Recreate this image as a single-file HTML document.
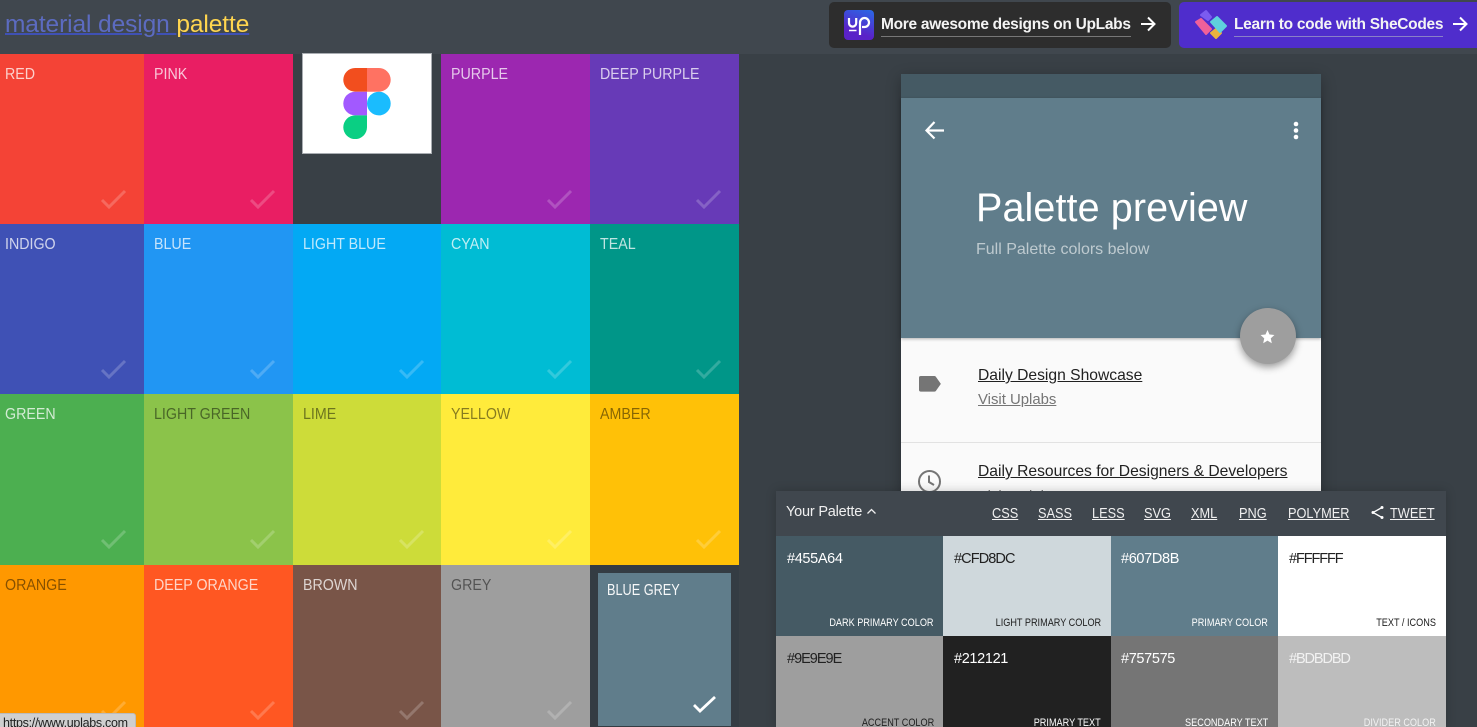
<!DOCTYPE html>
<html><head><meta charset="utf-8">
<style>
html,body{margin:0;padding:0;width:1477px;height:727px;overflow:hidden;background:#394046;font-family:"Liberation Sans",sans-serif}
#r{position:absolute;left:0;top:0;width:1477px;height:727px;overflow:hidden;background:#394046}
div,span,svg{position:absolute}
.t{white-space:nowrap}
.tile .l{left:5px;top:12px;font-size:16px;line-height:18px;white-space:nowrap;transform:scaleX(.89);transform-origin:left center}
.u{text-decoration:underline}
.w{color:#fff;opacity:.75}
.d{color:#000;opacity:.47}
.tab{top:506px;font-size:14.500px;line-height:17px;color:#f0f0f0;text-decoration:underline;white-space:nowrap;transform:scaleX(.88);transform-origin:left center}
.hex{font-size:14.500px;line-height:17px;letter-spacing:-.35px;white-space:nowrap}
.cap{font-size:11px;line-height:13px;white-space:nowrap;transform:scaleX(.83);transform-origin:right center}
.c{fill:none;stroke:#fff;stroke-width:3;opacity:.2}
</style></head><body><div id="r">
<div style="left:0;top:0;width:1477px;height:54px;background:#40474e"></div>
<div class="t" style="left:5px;top:10px;font-size:24.500px;line-height:30px;letter-spacing:-.1px"><u style="color:#5c6bc0;text-decoration-color:#3f51b5;text-decoration-thickness:2px">material design </u><u style="color:#ffd54f;text-decoration-color:#3f51b5;text-decoration-thickness:2px">palette</u></div>

<div style="left:829px;top:2px;width:342px;height:46px;background:#2d2d2d;border-radius:5px"></div>
<div style="left:844px;top:10px;width:30px;height:30px;border-radius:4px;background:linear-gradient(200deg,#2a6ae6,#5a22c8 70%)"></div>
<svg style="left:844px;top:10px" width="30" height="30" viewBox="0 0 30 30" fill="none" stroke="#fff" stroke-width="2.200"><path d="M5 8v5a3.600 3.600 0 0 0 7.200 0V8M16 25V12.500a4.500 4.500 0 1 1 4.500 4.500H18"/><path d="M5 20.500h7.500" stroke-width="1.500"/></svg>
<div class="t" style="left:881px;top:15px;font-size:15.500px;font-weight:bold;line-height:19px;color:#f4f4f4;letter-spacing:-.29px">More awesome designs on UpLabs</div>
<div style="left:881px;top:36px;width:250px;height:1px;background:#777"></div>
<svg style="left:1139px;top:15px" width="18" height="18" viewBox="0 0 18 18" fill="none" stroke="#fff" stroke-width="2"><path d="M2 9h13M9 2.500 15.500 9 9 15.500"/></svg>

<div style="left:1179px;top:2px;width:298px;height:46px;background:#4f2dcc;border-radius:5px 0 0 5px"></div>
<svg style="left:1192px;top:8px" width="36" height="34" viewBox="0 0 36 34" stroke-width="2" stroke-linejoin="round"><path d="M9 7l5-4 5 6-3 3z" fill="#7b5cf0" stroke="#7b5cf0"/><path d="M4 14l5-3 10 10-5 5z" fill="#f0609a" stroke="#f0609a"/><path d="M19 25l5-4 5 4-5 5z" fill="#ecb23f" stroke="#ecb23f"/><path d="M19 14l6-5 9 9-6 6z" fill="#5fd0dd" stroke="#5fd0dd"/></svg>
<div class="t" style="left:1234px;top:15px;font-size:15.500px;font-weight:bold;line-height:19px;color:#f4f4f4;letter-spacing:-.29px">Learn to code with SheCodes</div>
<div style="left:1234px;top:36px;width:209px;height:1px;background:#8a80c8"></div>
<svg style="left:1451px;top:15px" width="18" height="18" viewBox="0 0 18 18" fill="none" stroke="#fff" stroke-width="2"><path d="M2 9h13M9 2.500 15.500 9 9 15.500"/></svg>

<!-- row 1 -->
<div class="tile" style="left:0;top:54px;width:144px;height:170px;background:#f44336"><span class="l w">RED</span><svg style="left:100px;top:135px" width="27" height="21" viewBox="0 0 27 21" class="c"><path d="M2 11l7 7L25 2"/></svg></div>
<div class="tile" style="left:144px;top:54px;width:149px;height:170px;background:#e91e63"><span class="l w" style="left:10px">PINK</span><svg style="left:105px;top:135px" width="27" height="21" viewBox="0 0 27 21" class="c"><path d="M2 11l7 7L25 2"/></svg></div>
<div style="left:302px;top:53px;width:128px;height:99px;background:#fff;border:1px solid #a9adb2"></div>
<svg style="left:343px;top:68px" width="48" height="71" viewBox="0 0 47.400 71"><path d="M23.700 0H11.850a11.850 11.850 0 0 0 0 23.700H23.700z" fill="#f24e1e"/><path d="M23.700 0h11.850a11.850 11.850 0 0 1 0 23.700H23.700z" fill="#ff7262"/><path d="M23.700 23.700H11.850a11.850 11.850 0 0 0 0 23.700H23.700z" fill="#a259ff"/><circle cx="35.550" cy="35.550" r="11.850" fill="#1abcfe"/><path d="M11.850 47.400H23.700v11.850a11.850 11.850 0 1 1-11.850-11.850z" fill="#0acf83"/></svg>
<div class="tile" style="left:441px;top:54px;width:149px;height:170px;background:#9c27b0"><span class="l w" style="left:10px">PURPLE</span><svg style="left:105px;top:135px" width="27" height="21" viewBox="0 0 27 21" class="c"><path d="M2 11l7 7L25 2"/></svg></div>
<div class="tile" style="left:590px;top:54px;width:149px;height:170px;background:#673ab7"><span class="l w" style="left:10px">DEEP PURPLE</span><svg style="left:105px;top:135px" width="27" height="21" viewBox="0 0 27 21" class="c"><path d="M2 11l7 7L25 2"/></svg></div>
<!-- row 2 -->
<div class="tile" style="left:0;top:224px;width:144px;height:170px;background:#3f51b5"><span class="l w">INDIGO</span><svg style="left:100px;top:135px" width="27" height="21" viewBox="0 0 27 21" class="c"><path d="M2 11l7 7L25 2"/></svg></div>
<div class="tile" style="left:144px;top:224px;width:149px;height:170px;background:#2196f3"><span class="l w" style="left:10px">BLUE</span><svg style="left:105px;top:135px" width="27" height="21" viewBox="0 0 27 21" class="c"><path d="M2 11l7 7L25 2"/></svg></div>
<div class="tile" style="left:293px;top:224px;width:148px;height:170px;background:#03a9f4"><span class="l w" style="left:10px">LIGHT BLUE</span><svg style="left:105px;top:135px" width="27" height="21" viewBox="0 0 27 21" class="c"><path d="M2 11l7 7L25 2"/></svg></div>
<div class="tile" style="left:441px;top:224px;width:149px;height:170px;background:#00bcd4"><span class="l w" style="left:10px">CYAN</span><svg style="left:105px;top:135px" width="27" height="21" viewBox="0 0 27 21" class="c"><path d="M2 11l7 7L25 2"/></svg></div>
<div class="tile" style="left:590px;top:224px;width:149px;height:170px;background:#009688"><span class="l w" style="left:10px">TEAL</span><svg style="left:105px;top:135px" width="27" height="21" viewBox="0 0 27 21" class="c"><path d="M2 11l7 7L25 2"/></svg></div>
<!-- row 3 -->
<div class="tile" style="left:0;top:394px;width:144px;height:171px;background:#4caf50"><span class="l w">GREEN</span><svg style="left:100px;top:135px" width="27" height="21" viewBox="0 0 27 21" class="c"><path d="M2 11l7 7L25 2"/></svg></div>
<div class="tile" style="left:144px;top:394px;width:149px;height:171px;background:#8bc34a"><span class="l d" style="left:10px">LIGHT GREEN</span><svg style="left:105px;top:135px" width="27" height="21" viewBox="0 0 27 21" class="c"><path d="M2 11l7 7L25 2"/></svg></div>
<div class="tile" style="left:293px;top:394px;width:148px;height:171px;background:#cddc39"><span class="l d" style="left:10px">LIME</span><svg style="left:105px;top:135px" width="27" height="21" viewBox="0 0 27 21" class="c"><path d="M2 11l7 7L25 2"/></svg></div>
<div class="tile" style="left:441px;top:394px;width:149px;height:171px;background:#ffeb3b"><span class="l d" style="left:10px">YELLOW</span><svg style="left:105px;top:135px" width="27" height="21" viewBox="0 0 27 21" class="c"><path d="M2 11l7 7L25 2"/></svg></div>
<div class="tile" style="left:590px;top:394px;width:149px;height:171px;background:#ffc107"><span class="l d" style="left:10px">AMBER</span><svg style="left:105px;top:135px" width="27" height="21" viewBox="0 0 27 21" class="c"><path d="M2 11l7 7L25 2"/></svg></div>
<!-- row 4 -->
<div class="tile" style="left:0;top:565px;width:144px;height:162px;background:#ff9800"><span class="l d">ORANGE</span><svg style="left:100px;top:135px" width="27" height="21" viewBox="0 0 27 21" class="c"><path d="M2 11l7 7L25 2"/></svg></div>
<div class="tile" style="left:144px;top:565px;width:149px;height:162px;background:#ff5722"><span class="l w" style="left:10px">DEEP ORANGE</span><svg style="left:105px;top:135px" width="27" height="21" viewBox="0 0 27 21" class="c"><path d="M2 11l7 7L25 2"/></svg></div>
<div class="tile" style="left:293px;top:565px;width:148px;height:162px;background:#795548"><span class="l w" style="left:10px">BROWN</span><svg style="left:105px;top:135px" width="27" height="21" viewBox="0 0 27 21" class="c"><path d="M2 11l7 7L25 2"/></svg></div>
<div class="tile" style="left:441px;top:565px;width:149px;height:162px;background:#9e9e9e"><span class="l d" style="left:10px">GREY</span><svg style="left:105px;top:135px" width="27" height="21" viewBox="0 0 27 21" class="c"><path d="M2 11l7 7L25 2"/></svg></div>
<div style="left:590px;top:565px;width:149px;height:162px;background:#343c43"></div>
<div class="tile" style="left:598px;top:573px;width:133px;height:153px;background:#607d8b"><span class="l" style="left:9px;top:9px;color:#fff;font-size:15.500px;opacity:.95;transform:scaleX(.82)">BLUE GREY</span><svg style="left:93px;top:123px" width="27" height="18" viewBox="0 0 27 18" fill="none" stroke="#fff" stroke-width="2.800"><path d="M3 9l6 6L24 1"/></svg></div>

<!-- status tooltip -->
<div style="left:-3px;top:713px;width:137px;height:20px;background:#cfcfcf;border:1px solid #bbb;border-radius:3px"></div>
<div class="t" style="left:3px;top:716px;font-size:12.500px;line-height:15px;color:#222;letter-spacing:-.3px">https://www.uplabs.com</div>

<!-- phone -->
<div style="left:901px;top:74px;width:420px;height:430px;background:#fafafa;box-shadow:0 4px 14px rgba(0,0,0,.3)"></div>
<div style="left:901px;top:74px;width:420px;height:24px;background:#455a64"></div>
<div style="left:901px;top:98px;width:420px;height:240px;background:#607d8b;box-shadow:0 1px 3px rgba(0,0,0,.3)"></div>
<svg style="left:924px;top:120px" width="21" height="21" viewBox="0 0 21 21" fill="none" stroke="#fff" stroke-width="2.200"><path d="M20 10.500H3M10.500 2 2.500 10.500l8 8"/></svg>
<svg style="left:1291px;top:120px" width="10" height="21" viewBox="0 0 10 21" fill="#fff"><circle cx="5" cy="4" r="2.300"/><circle cx="5" cy="10.500" r="2.300"/><circle cx="5" cy="17" r="2.300"/></svg>
<div class="t" style="left:976px;top:185px;font-size:39.500px;line-height:46px;color:#fff;letter-spacing:.1px">Palette preview</div>
<div class="t" style="left:976px;top:241px;font-size:16px;line-height:18px;color:#cfd8dc;opacity:.85">Full Palette colors below</div>
<div style="left:1239.500px;top:308px;width:56px;height:56px;border-radius:50%;background:#9e9e9e;box-shadow:0 3px 8px rgba(0,0,0,.4)"></div>
<svg style="left:1260px;top:329px" width="15" height="15" viewBox="0 0 24 24" fill="#fff"><path d="M12 1.500l3.200 7.300 7.900.8-5.900 5.300 1.700 7.800L12 18.600l-6.900 4.100 1.700-7.800L.9 9.600l7.900-.8z"/></svg>
<svg style="left:918px;top:375px" width="24" height="18" viewBox="0 0 24 18"><path d="M2 0h14.500a2 2 0 0 1 1.600.8L23.500 9l-5.400 8.200a2 2 0 0 1-1.600.8H2a2 2 0 0 1-2-2V2a2 2 0 0 1 2-2z" fill="#757575" transform="translate(1 1) scale(.93 .87)"/></svg>
<div class="t u" style="left:978px;top:366px;font-size:15.650px;line-height:19px;color:#212121">Daily Design Showcase</div>
<div class="t u" style="left:978px;top:391px;font-size:14.900px;line-height:18px;color:#757575">Visit Uplabs</div>
<div style="left:901px;top:442px;width:420px;height:1px;background:#e2e2e2"></div>
<svg style="left:917px;top:469px" width="25" height="25" viewBox="0 0 25 25" fill="none" stroke="#757575" stroke-width="2"><circle cx="12.500" cy="12.500" r="10.500"/><path d="M12 6.500v6.500l5 3"/></svg>
<div class="t u" style="left:978px;top:462px;font-size:15.650px;line-height:19px;color:#212121">Daily Resources for Designers &amp; Developers</div>
<div class="t u" style="left:978px;top:488px;font-size:14.900px;line-height:18px;color:#757575">Visit Uplabs</div>

<!-- palette panel -->
<div style="left:776px;top:491px;width:670px;height:236px;background:#40474e;box-shadow:0 0 10px rgba(0,0,0,.2)"></div>
<div class="t" style="left:786px;top:504px;font-size:14.500px;line-height:17px;color:#f0f0f0;letter-spacing:-.2px">Your Palette</div>
<svg style="left:866px;top:507px" width="11" height="9" viewBox="0 0 11 9" fill="none" stroke="#eee" stroke-width="1.300"><path d="M1.500 6.500 5.500 2.500l4 4"/></svg>
<div class="tab" style="left:992px">CSS</div>
<div class="tab" style="left:1038px">SASS</div>
<div class="tab" style="left:1092px">LESS</div>
<div class="tab" style="left:1144px">SVG</div>
<div class="tab" style="left:1191px">XML</div>
<div class="tab" style="left:1239px">PNG</div>
<div class="tab" style="left:1288px">POLYMER</div>
<svg style="left:1370px;top:505px" width="15" height="15" viewBox="0 0 15 15" fill="#fff" stroke="#fff"><path d="M12 2.500 3 7.500l9 5" fill="none" stroke-width="1.300"/><circle cx="12" cy="2.500" r="1.500" stroke="none"/><circle cx="3" cy="7.500" r="1.500" stroke="none"/><circle cx="12" cy="12.500" r="1.500" stroke="none"/></svg>
<div class="tab" style="left:1390px">TWEET</div>

<div style="left:776px;top:536px;width:167px;height:100px;background:#455a64"></div>
<div style="left:943px;top:536px;width:168px;height:100px;background:#cfd8dc"></div>
<div style="left:1111px;top:536px;width:167px;height:100px;background:#607d8b"></div>
<div style="left:1278px;top:536px;width:168px;height:100px;background:#fff"></div>
<div style="left:776px;top:636px;width:167px;height:91px;background:#9e9e9e"></div>
<div style="left:943px;top:636px;width:168px;height:91px;background:#212121"></div>
<div style="left:1111px;top:636px;width:167px;height:91px;background:#757575"></div>
<div style="left:1278px;top:636px;width:168px;height:91px;background:#bdbdbd"></div>

<div class="hex" style="left:787px;top:551px;color:#fff">#455A64</div>
<div class="hex" style="left:954px;top:551px;color:#212121;letter-spacing:-.9px">#CFD8DC</div>
<div class="hex" style="left:1121px;top:551px;color:#fff">#607D8B</div>
<div class="hex" style="left:1289px;top:551px;color:#212121;letter-spacing:-1.100px">#FFFFFF</div>
<div class="hex" style="left:787px;top:651px;color:#212121;letter-spacing:-1px">#9E9E9E</div>
<div class="hex" style="left:954px;top:651px;color:#fff">#212121</div>
<div class="hex" style="left:1121px;top:651px;color:#fff">#757575</div>
<div class="hex" style="left:1289px;top:651px;color:#f2f2f2;letter-spacing:-1.100px">#BDBDBD</div>

<div class="cap" style="right:543px;top:617px;color:#fff">DARK PRIMARY COLOR</div>
<div class="cap" style="right:376px;top:617px;color:#212121">LIGHT PRIMARY COLOR</div>
<div class="cap" style="right:209px;top:617px;color:#fff">PRIMARY COLOR</div>
<div class="cap" style="right:41px;top:617px;color:#212121">TEXT / ICONS</div>
<div class="cap" style="right:543px;top:717px;color:#212121">ACCENT COLOR</div>
<div class="cap" style="right:376px;top:717px;color:#fff">PRIMARY TEXT</div>
<div class="cap" style="right:209px;top:717px;color:#fff">SECONDARY TEXT</div>
<div class="cap" style="right:41px;top:717px;color:#f2f2f2">DIVIDER COLOR</div>
</div></body></html>
